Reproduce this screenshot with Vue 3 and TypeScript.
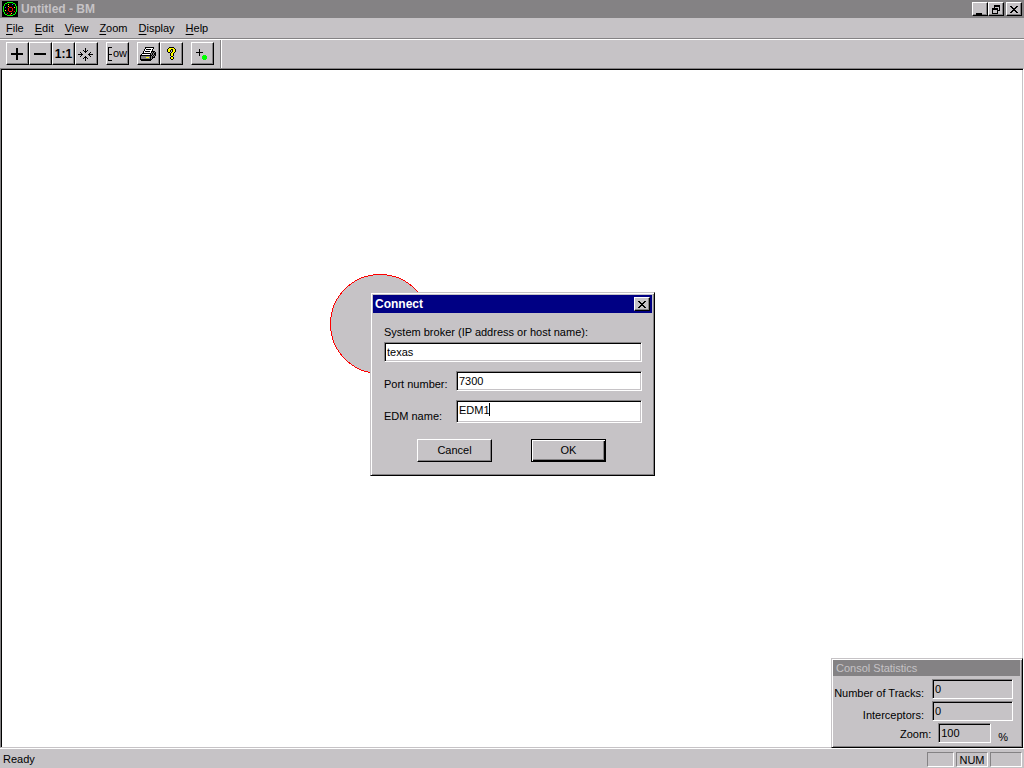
<script setup lang="ts">
import { ref } from 'vue'

interface Layer { color: string; d: string }

const palette: Record<string, string> = {
  '#': '#000000',
  w: '#ffffff',
  y: '#ffff00',
  g: '#00ff00',
  r: '#ff0000',
  b: '#3060ff',
  s: '#848284',
}

function bitmap(rows: string[], ox = 0, oy = 0): Layer[] {
  const layers: Record<string, string> = {}
  rows.forEach((row, y) => {
    ;[...row].forEach((c, x) => {
      if (c === '.') return
      layers[c] = (layers[c] ?? '') + `M${x + ox} ${y + oy}h1v1h-1z`
    })
  })
  return Object.entries(layers).map(([c, d]) => ({ color: palette[c], d }))
}

const logo = bitmap([
  '################',
  '#####gggggg#####',
  '###gg######gg###',
  '##g###y###b##g##',
  '##g##########g##',
  '#g####y#######g#',
  '#g#b###rrr##y#g#',
  '#g####r###r###g#',
  '#g####r###r###g#',
  '#g#y##r###r###g#',
  '#g#####rrr##r#g#',
  '##g##########g##',
  '##g##r###y###g##',
  '###gg###r##gg###',
  '#####gggggg#####',
  '################',
])

const centre = bitmap([
  '.......#.......',
  '.......#.......',
  '.....#.#.#.....',
  '......###......',
  '..#....#....#..',
  '...#.......#...',
  '#####.....#####',
  '...#.......#...',
  '..#....#....#..',
  '......###......',
  '.....#.#.#.....',
  '.......#.......',
  '.......#.......',
], 2, 4)

const bracket = bitmap([
  '####', '#...', '#...', '#...', '#...', '#...', '#...', '####',
  '#...', '#...', '#...', '#...', '#...', '####',
], 1, 3)

const printer = bitmap([
  '.....#########..',
  '.....#wwwwwww#..',
  '....#w#####w#...',
  '....#wwwwwww#...',
  '...#w#####w####.',
  '...#wwwwwww#s#s#',
  '..#########s#s##',
  '.#wwwwwwww#s#s##',
  '############s#s#',
  '#sssssssss#s#s#.',
  '#sssssyyys#s###.',
  '#sssssssss#s#...',
  '############....',
  '.##########.....',
], 2, 3)

const question = bitmap([
  '..#####..',
  '.#yyyyy#.',
  '#yyy##yy#',
  '#yy#.#yy#',
  '#yy#.#yy#',
  '.##.#yy#.',
  '...#yy#..',
  '...#yy#..',
  '...#yy#..',
  '....##...',
  '...#yy#..',
  '...#yy#..',
  '....##...',
], 6, 3)

const marker = bitmap([
  '...#.......',
  '...#.......',
  '...#.......',
  '#######....',
  '...#.......',
  '...#.......',
  '...#...ggg.',
  '......ggggg',
  '......ggggg',
  '......ggggg',
  '.......ggg.',
], 4, 5)

const plus: Layer[] = [{ color: '#000', d: 'M4 9h12v2h-12zM9 4h2v12h-2z' }]
const minus: Layer[] = [{ color: '#000', d: 'M4 9h12v2h-12z' }]

const tools: { name: string; icon?: Layer[]; text?: string; small?: boolean }[][] = [
  [
    { name: 'Zoom in', icon: plus },
    { name: 'Zoom out', icon: minus },
    { name: 'Actual size', text: '1:1' },
    { name: 'Centre', icon: centre },
  ],
  [{ name: 'EOW', icon: bracket, text: 'ow', small: true }],
  [
    { name: 'Print', icon: printer },
    { name: 'About', icon: question },
  ],
  [{ name: 'Add track', icon: marker }],
]

const caption: { name: string; d: string }[] = [
  { name: 'Minimize', d: 'M3 9h6v2h-6z' },
  { name: 'Restore', d: 'M5 1h6v2h-6zM5 3h1v1h-1zM10 3h1v4h-1zM9 6h1v1h-1zM3 4h6v2h-6zM3 6h1v4h-1zM8 6h1v4h-1zM3 9h6v1h-6z' },
]
const cross = 'M3 2h2v1h-2zM9 2h2v1h-2zM4 3h2v1h-2zM8 3h2v1h-2zM5 4h4v1h-4zM6 5h2v1h-2zM5 6h4v1h-4zM4 7h2v1h-2zM8 7h2v1h-2zM3 8h2v1h-2zM9 8h2v1h-2z'

const menus = ['File', 'Edit', 'View', 'Zoom', 'Display', 'Help']

const broker = ref('texas')
const port = ref('7300')
const edm = ref('EDM1')
</script>

<template>
  <div class="window">
    <header class="titlebar">
      <svg class="logo" width="16" height="16" viewBox="0 0 16 16" shape-rendering="crispEdges">
        <path v-for="l in logo" :key="l.color" :fill="l.color" :d="l.d" />
      </svg>
      <h1>Untitled - BM</h1>
      <button v-for="c in caption" :key="c.name" class="cap" :aria-label="c.name">
        <svg width="13" height="11" viewBox="0 0 13 11" shape-rendering="crispEdges"><path :d="c.d" /></svg>
      </button>
      <button class="cap close" aria-label="Close">
        <svg width="13" height="11" viewBox="0 0 13 11" shape-rendering="crispEdges"><path :d="cross" /></svg>
      </button>
    </header>

    <nav class="menubar">
      <button v-for="m in menus" :key="m"><u>{{ m[0] }}</u>{{ m.slice(1) }}</button>
    </nav>

    <div class="toolbar">
      <div v-for="(group, i) in tools" :key="i" class="group">
        <button v-for="t in group" :key="t.name" class="tool" :aria-label="t.name">
          <svg v-if="t.icon" width="20" height="20" viewBox="0 0 20 20" shape-rendering="crispEdges">
            <path v-for="l in t.icon" :key="l.color" :fill="l.color" :d="l.d" />
          </svg>
          <span v-if="t.text" :class="t.small ? 'ow' : 'ratio'">{{ t.text }}</span>
        </button>
      </div>
      <div class="divider"></div>
    </div>

    <main class="canvas">
      <svg class="range" width="101" height="101" viewBox="0 0 101 101" shape-rendering="crispEdges">
        <circle cx="50" cy="50" r="49.5" fill="#c6c3c6" stroke="#ff0000" />
      </svg>

      <section class="stats">
        <h2>Consol Statistics</h2>
        <div class="stat first">
          <label for="tracks">Number of Tracks:</label>
          <input id="tracks" class="field" value="0" readonly />
        </div>
        <div class="stat">
          <label for="inter">Interceptors:</label>
          <input id="inter" class="field" value="0" readonly />
        </div>
        <div class="stat zoom">
          <label for="zoom">Zoom:</label>
          <input id="zoom" class="field" value="100" readonly />
          <span>%</span>
        </div>
      </section>
    </main>

    <footer class="status">
      <span class="ready">Ready</span>
      <span class="pane caps"></span>
      <span class="pane num">NUM</span>
      <span class="pane scroll"></span>
    </footer>

    <form class="dialog" role="dialog" aria-labelledby="dlg-title" @submit.prevent>
      <div class="dialog-title">
        <h2 id="dlg-title">Connect</h2>
        <button type="button" class="cap" aria-label="Close dialog">
          <svg width="13" height="11" viewBox="0 0 13 11" shape-rendering="crispEdges"><path :d="cross" /></svg>
        </button>
      </div>
      <div class="dialog-body">
        <label for="broker">System broker (IP address or host name):</label>
        <input id="broker" v-model="broker" class="field" />
        <div class="row">
          <label for="port">Port number:</label>
          <input id="port" v-model="port" class="field" />
        </div>
        <div class="row">
          <label for="edm">EDM name:</label>
          <div class="edit">
            <input id="edm" v-model="edm" class="field tall" />
            <i class="caret"></i>
          </div>
        </div>
        <div class="actions">
          <button type="button" class="push">Cancel</button>
          <button type="submit" class="push default">OK</button>
        </div>
      </div>
    </form>
  </div>
</template>

<style>
html, body { height: 100%; margin: 0; }
#app { height: 100%; }
</style>

<style scoped>
* { box-sizing: border-box; }
.window {
  position: relative;
  display: flex;
  flex-direction: column;
  min-height: 100vh;
  background: #c6c3c6;
  color: #000;
  font: 11px/14px "Liberation Sans", Arial, sans-serif;
}
button, input { font: inherit; color: inherit; border-radius: 0; margin: 0; padding: 0; outline: none; }
button { background: #c6c3c6; border: 0; }
svg { display: block; flex: none; }
h1, h2 { margin: 0; font: bold 12px/14px "Liberation Sans", Arial, sans-serif; }

.titlebar {
  display: flex;
  align-items: center;
  height: 18px;
  padding: 0 2px;
  background: #848284;
}
.titlebar h1 { flex: 1; margin-left: 3px; color: #c6c3c6; }
.cap {
  width: 16px;
  height: 14px;
  border: 1px solid;
  border-color: #fff #000 #000 #fff;
  box-shadow: inset -1px -1px #848284;
}
.close { margin-left: 2px; }

.menubar {
  display: flex;
  gap: 11px;
  height: 20px;
  padding: 0 6px;
}
.menubar button { line-height: 20px; }
.menubar u { text-underline-offset: 2px; text-decoration-thickness: 1px; }

.toolbar {
  display: flex;
  gap: 8px;
  height: 30px;
  padding-left: 6px;
  border-top: 1px solid #848284;
  box-shadow: inset 0 1px #fff;
}
.group { display: flex; margin-top: 3px; }
.tool {
  position: relative;
  display: block;
  width: 23px;
  height: 23px;
  border: 1px solid;
  border-color: #fff #000 #000 #fff;
  box-shadow: inset -1px -1px #848284;
}
.ratio { display: block; font: bold 12px/20px "Liberation Sans", Arial, sans-serif; }
.ow { position: absolute; left: 6px; top: 3px; font: 11px/14px "Liberation Sans", Arial, sans-serif; }
.divider { width: 2px; margin-top: 1px; margin-left: -2px; border-left: 1px solid #848284; border-right: 1px solid #fff; }

.canvas {
  position: relative;
  flex: 1;
  background: #fff;
  border: 1px solid;
  border-color: #848284 #fff #c6c3c6 #848284;
  box-shadow: inset 1px 1px #000, inset -1px 0 #c6c3c6;
}
.range { position: absolute; left: 329px; top: 205px; }

.stats {
  position: absolute;
  right: 0;
  bottom: -1px;
  width: 192px;
  padding: 1px 2px 4px 1px;
  background: #c6c3c6;
  border: 1px solid;
  border-color: #c6c3c6 #000 #000 #c6c3c6;
  box-shadow: inset 1px 1px #fff, inset -1px -1px #848284;
}
.stats h2 { padding-left: 3px; background: #848284; color: #c6c3c6; font: 11px/16px "Liberation Sans", Arial, sans-serif; }
.stat { display: flex; justify-content: flex-end; align-items: flex-end; gap: 8px; margin: 2px 7px 0 0; }
.stat.first { margin-top: 3px; }
.stat label { line-height: 11px; }
.stat .field { width: 81px; background: #c6c3c6; }
.stat.zoom { gap: 7px; margin-right: 12px; }
.stat.zoom label { line-height: 18px; }
.stat.zoom .field { width: 53px; }
.stat.zoom span { line-height: 11px; }

.field {
  display: block;
  height: 20px;
  min-width: 0;
  padding: 0 2px;
  background: #fff;
  border: 1px solid;
  border-color: #848284 #fff #fff #848284;
  box-shadow: inset 1px 1px #000, inset -1px -1px #c6c3c6;
}

.status {
  display: flex;
  align-items: flex-start;
  gap: 2px;
  height: 20px;
  padding: 3px 2px 0 3px;
  border-top: 1px solid #fff;
  line-height: 14px;
}
.ready { flex: 1; }
.pane { height: 15px; border: 1px solid; border-color: #848284 #fff #fff #848284; line-height: 14px; text-align: center; }
.caps { width: 27px; }
.num { width: 32px; }
.scroll { width: 32px; }

.dialog {
  position: absolute;
  left: 50%;
  top: 50%;
  width: 285px;
  margin: -92px 0 0 -142px;
  padding: 2px 2px 13px;
  background: #c6c3c6;
  border: 1px solid;
  border-color: #c6c3c6 #000 #000 #c6c3c6;
  box-shadow: inset 1px 1px #fff, inset -1px -1px #848284;
}
.dialog-title { display: flex; align-items: center; height: 18px; padding: 0 2px; background: #000084; color: #fff; }
.dialog-title h2 { flex: 1; }
.dialog-body { display: flex; flex-direction: column; padding: 12px 10px 0 11px; }
.dialog-body > .field { margin-top: 3px; }
.row { display: flex; align-items: flex-end; margin-top: 9px; }
.row label { width: 72px; line-height: 13px; }
.row > .field, .edit { flex: 1; }
.edit { position: relative; }
.edit .field { width: 100%; }
.tall { height: 23px; padding-bottom: 3px; }
.caret { position: absolute; left: 33px; top: 3px; width: 1px; height: 13px; background: #000; }
.actions { display: flex; gap: 39px; margin-top: 16px; padding-left: 33px; }
.push {
  width: 75px;
  height: 23px;
  padding-bottom: 2px;
  border: 1px solid;
  border-color: #fff #000 #000 #fff;
  box-shadow: inset -1px -1px #848284;
}
.default { border-color: #000; box-shadow: inset 1px 1px #fff, inset -1px -1px #000, inset -2px -2px #848284; }
</style>
